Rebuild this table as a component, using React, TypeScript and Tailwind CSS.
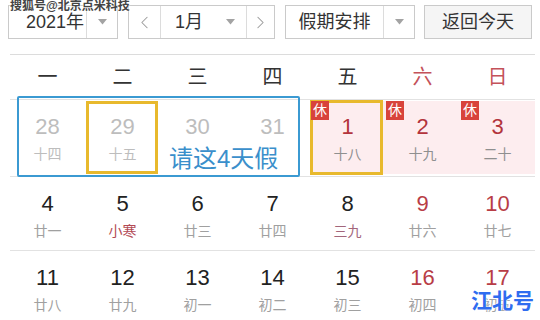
import { ChevronLeft, ChevronRight } from "lucide-react";

const Caret = () => (
  <svg width="9" height="6" viewBox="0 0 9 6">
    <path d="M0 0 L9 0 L4.5 5.5 Z" fill="#a3a3a3" />
  </svg>
);

type Day = { n: string; l: string; nc: string; lc: string };

const row2: Day[] = [
  { n: "4", l: "廿一", nc: "text-[#222]", lc: "text-[#a0a0a0]" },
  { n: "5", l: "小寒", nc: "text-[#222]", lc: "text-[#b34a55]" },
  { n: "6", l: "廿三", nc: "text-[#222]", lc: "text-[#a0a0a0]" },
  { n: "7", l: "廿四", nc: "text-[#222]", lc: "text-[#a0a0a0]" },
  { n: "8", l: "三九", nc: "text-[#222]", lc: "text-[#a3667b]" },
  { n: "9", l: "廿六", nc: "text-[#b83d46]", lc: "text-[#a0a0a0]" },
  { n: "10", l: "廿七", nc: "text-[#b83d46]", lc: "text-[#a0a0a0]" },
];

const row3: Day[] = [
  { n: "11", l: "廿八", nc: "text-[#222]", lc: "text-[#a0a0a0]" },
  { n: "12", l: "廿九", nc: "text-[#222]", lc: "text-[#a0a0a0]" },
  { n: "13", l: "初一", nc: "text-[#222]", lc: "text-[#a0a0a0]" },
  { n: "14", l: "初二", nc: "text-[#222]", lc: "text-[#a0a0a0]" },
  { n: "15", l: "初三", nc: "text-[#222]", lc: "text-[#a0a0a0]" },
  { n: "16", l: "初四", nc: "text-[#b83d46]", lc: "text-[#a0a0a0]" },
  { n: "17", l: "初五", nc: "text-[#b83d46]", lc: "text-[#a0a0a0]" },
];

const Cell = ({ d }: { d: Day }) => (
  <div className="flex flex-col items-center pt-[14px]">
    <span className={`text-[22px] leading-[26px] ${d.nc}`}>{d.n}</span>
    <span className={`text-[14px] leading-[18px] mt-[5px] ${d.lc}`}>{d.l}</span>
  </div>
);

const Rest = () => (
  <div className="absolute left-[1px] top-[0px] w-[18px] h-[19px] bg-[#d8433b] text-white text-[14px] leading-[19px] text-center z-10">
    休
  </div>
);

export default function App() {
  const weekdays = ["一", "二", "三", "四", "五", "六", "日"];
  return (
    <div className="w-[540px] h-[320px] bg-white relative overflow-hidden font-['Liberation_Sans','Noto_Sans_CJK_SC',sans-serif]">
      {/* top controls */}
      <div className="flex pt-[5px] pl-[8px] h-[39px] text-[#333] text-[18px]">
        <div className="flex w-[110px] h-[34px] border border-[#cacaca]">
          <div className="w-[77px] flex items-center justify-end pr-[2px]">2021年</div>
          <div className="flex-1 border-l border-[#dcdcdc] flex items-center justify-center">
            <Caret />
          </div>
        </div>
        <div className="flex w-[147px] h-[34px] border border-[#cacaca] ml-[10px]">
          <div className="w-[32px] border-r border-[#dcdcdc] flex items-center justify-center">
            <ChevronLeft size={21} strokeWidth={1.2} color="#999" />
          </div>
          <div className="w-[85px] flex items-center pl-[14px]">
            <span>1月</span>
            <span className="ml-[23px] flex">
              <Caret />
            </span>
          </div>
          <div className="flex-1 border-l border-[#dcdcdc] flex items-center justify-center">
            <ChevronRight size={21} strokeWidth={1.2} color="#999" />
          </div>
        </div>
        <div className="flex w-[130px] h-[34px] border border-[#cacaca] ml-[10px]">
          <div className="w-[97px] flex items-center justify-center">假期安排</div>
          <div className="flex-1 border-l border-[#dcdcdc] flex items-center justify-center">
            <Caret />
          </div>
        </div>
        <div className="w-[108px] h-[34px] border border-[#cacaca] bg-[#f5f5f5] ml-[9px] flex items-center justify-center">
          返回今天
        </div>
      </div>

      {/* calendar */}
      <div className="ml-[10px] w-[525px] mt-[15px] border-t border-[#dcdcdc]">
        <div className="grid grid-cols-7 h-[44px] items-center text-[20px]">
          {weekdays.map((w, i) => (
            <div key={w} className={`text-center ${i > 4 ? "text-[#c4525a]" : "text-[#333]"}`}>
              {w}
            </div>
          ))}
        </div>

        <div className="relative grid grid-cols-7 h-[77px] border-t border-[#e2e2e2]">
          <Cell d={{ n: "28", l: "十四", nc: "text-[#bdbdbd]", lc: "text-[#bdbdbd]" }} />
          <div className="relative">
            <div className="absolute left-[1px] right-[2px] top-[1px] bottom-[2px] border-[3px] border-[#e8b92d]" />
            <Cell d={{ n: "29", l: "十五", nc: "text-[#bdbdbd]", lc: "text-[#bdbdbd]" }} />
          </div>
          <Cell d={{ n: "30", l: "", nc: "text-[#bdbdbd]", lc: "text-[#bdbdbd]" }} />
          <Cell d={{ n: "31", l: "", nc: "text-[#bdbdbd]", lc: "text-[#bdbdbd]" }} />
          <div className="relative bg-[#fdedef] mt-[1px] mb-[2px]">
            <div className="absolute left-0 right-[2px] -top-[1px] bottom-[-1px] border-[3px] border-[#e8b92d]" />
            <Rest />
            <div className="-mt-[1px]">
              <Cell d={{ n: "1", l: "十八", nc: "text-[#b3343c]", lc: "text-[#8f8f8f]" }} />
            </div>
          </div>
          <div className="relative bg-[#fdedef] mt-[1px] mb-[2px]">
            <Rest />
            <div className="-mt-[1px]">
              <Cell d={{ n: "2", l: "十九", nc: "text-[#b3343c]", lc: "text-[#8f8f8f]" }} />
            </div>
          </div>
          <div className="relative bg-[#fdedef] mt-[1px] mb-[2px]">
            <Rest />
            <div className="-mt-[1px]">
              <Cell d={{ n: "3", l: "二十", nc: "text-[#b3343c]", lc: "text-[#8f8f8f]" }} />
            </div>
          </div>

          <div className="absolute left-[7px] top-[-4px] w-[283px] h-[81px] border-2 border-[#3b9ad2] rounded-[2px] pointer-events-none" />
          <div className="absolute left-[159px] top-[46px] text-[24px] leading-[26px] text-[#3a8fcb]">
            请这4天假
          </div>
        </div>

        <div className="grid grid-cols-7 h-[74px] border-t border-[#e2e2e2]">
          {row2.map((d) => (
            <Cell key={d.n} d={d} />
          ))}
        </div>
        <div className="grid grid-cols-7 h-[75px] border-t border-[#e2e2e2]">
          {row3.map((d) => (
            <Cell key={d.n} d={d} />
          ))}
        </div>
      </div>

      {/* watermarks */}
      <div className="absolute left-[10px] top-[-1px] text-[12px] leading-[14px] font-bold text-[#444] [text-shadow:0_0_2px_#fff,0_0_2px_#fff]">
        搜狐号@北京点米科技
      </div>
      <div className="absolute right-[6px] bottom-[7px] text-[21px] leading-[24px] font-bold text-[#2f6cf0] [text-shadow:0_0_2px_#fff,0_0_2px_#fff]">
        江北号
      </div>
    </div>
  );
}
